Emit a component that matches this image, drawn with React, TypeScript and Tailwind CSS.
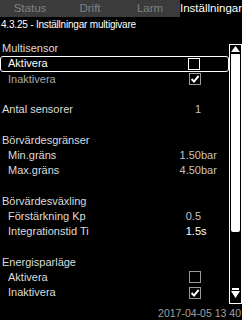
type RowProps = {
  label: string;
  value?: string;
  unit?: string;
  box?: "empty" | "checked";
  indent?: boolean;
  selected?: boolean;
  tone?: string;
  valueTone?: string;
};

function CheckBox({ kind, selected }: { kind: "empty" | "checked"; selected?: boolean }) {
  return (
    <div
      className={`w-[12px] h-[12px] border flex items-center justify-center ${
        selected ? "border-white" : "border-[#9a9a9a]"
      }`}
    >
      {kind === "checked" && (
        <svg width="10" height="10" viewBox="0 0 10 10">
          <path d="M1.6 5 L4 7.6 L8.6 2" stroke="white" strokeWidth="2" fill="none" />
        </svg>
      )}
    </div>
  );
}

function Row({ label, value, unit, box, indent, selected, tone, valueTone }: RowProps) {
  return (
    <div
      className={`flex items-center h-[15.25px] leading-[15.25px] ${
        selected ? "border border-white rounded-[3px] -mx-[0px]" : ""
      }`}
    >
      <span className={`flex-1 ${indent ? (selected ? "pl-[7px]" : "pl-[8px]") : "pl-[2px]"} ${tone ?? "text-[#dcdcdc]"}`}>
        {label}
      </span>
      <div className="flex items-center justify-end w-[60px]">
        {box && <CheckBox kind={box} selected={selected} />}
        {value && <span className={valueTone ?? "text-[#c4c4c4]"}>{value}</span>}
      </div>
      <span className={`w-[28px] ${valueTone ?? "text-[#c4c4c4]"}`}>{unit}</span>
    </div>
  );
}

function ScrollBar() {
  return (
    <div className="mt-[12px] h-[260px] w-[13px] border border-white flex flex-col items-center py-[1px]">
      {/* up arrow + thumb */}
      <svg width="9" height="7" viewBox="0 0 9 7">
        <polygon points="4.5,0 9,6 0,6" fill="white" />
      </svg>
      <div className="w-[9px] h-[178px] bg-white rounded-b-[2px] mt-[1px]" />
      <div className="flex-1" />
      {/* down arrow */}
      <div className="w-[7px] h-[2px] bg-white mb-[1px]" />
      <svg width="9" height="7" viewBox="0 0 9 7" className="mb-[4px]">
        <polygon points="0,0 9,0 4.5,7" fill="white" />
      </svg>
    </div>
  );
}

export default function App() {
  const tabs = ["Status", "Drift", "Larm"];

  return (
    <div className="w-[242px] h-[320px] bg-black overflow-hidden flex flex-col font-['Liberation_Sans',sans-serif] text-[11px]">
      {/* tab bar */}
      <div className="flex h-[17px] bg-[#3b3b3b]">
        {tabs.map((t) => (
          <div key={t} className="w-[60px] flex items-center justify-center text-[#808080] text-[11.5px]">
            {t}
          </div>
        ))}
        <div className="flex-1 bg-black text-white flex items-center justify-center text-[11.5px]">
          Inställningar
        </div>
      </div>

      {/* breadcrumb */}
      <div className="h-[15px] leading-[15px] pl-[1px] text-white text-[10px] tracking-[-0.2px]">
        4.3.25 - Inställningar multigivare
      </div>

      {/* body */}
      <div className="flex h-[274px]">
        <div className="flex-1 pt-[9px] flex flex-col gap-[15.25px]">
          <div>
            <Row label="Multisensor" />
            <Row label="Aktivera" indent selected box="empty" tone="text-white" />
            <Row label="Inaktivera" indent box="checked" tone="text-[#a8a8a8]" />
          </div>
          <div>
            <Row label="Antal sensorer" value="1" />
          </div>
          <div>
            <Row label="Börvärdesgränser" />
            <Row label="Min.gräns" indent value="1.50" unit="bar" />
            <Row label="Max.gräns" indent value="4.50" unit="bar" />
          </div>
          <div>
            <Row label="Börvärdesväxling" />
            <Row label="Förstärkning Kp" indent value="0.5" />
            <Row label="Integrationstid Ti" indent value="1.5" unit="s" valueTone="text-white" />
          </div>
          <div>
            <Row label="Energisparläge" />
            <Row label="Aktivera" indent box="empty" />
            <Row label="Inaktivera" indent box="checked" />
          </div>
        </div>
        <ScrollBar />
      </div>

      {/* clock */}
      <div className="h-[14px] leading-[14px] text-right pr-[1px] text-[#a0a0a0] text-[10.5px]">
        2017-04-05 13 40
      </div>
    </div>
  );
}
